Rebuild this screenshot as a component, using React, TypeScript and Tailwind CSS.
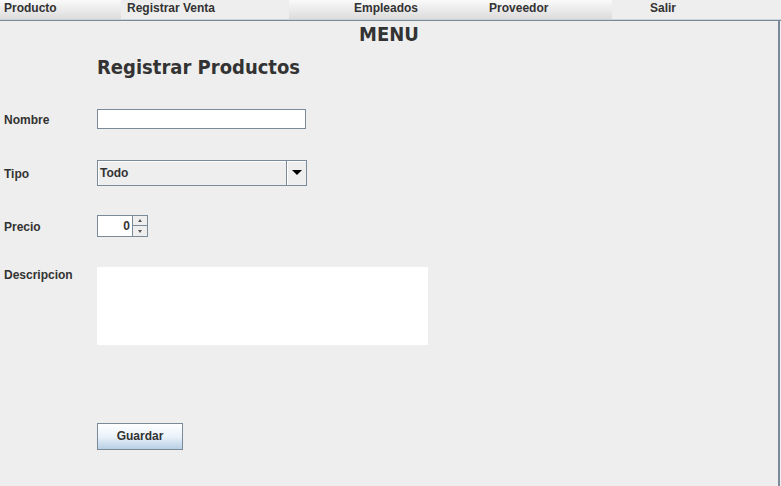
import React from "react";

const lbl = "font-['Liberation_Sans',Arial,sans-serif] font-bold text-[12px] text-[#333333]";

export default function App() {
  return (
    <div className="w-[781px] h-[486px] bg-[#eeeeee] flex flex-col overflow-hidden">
      {/* Menu bar */}
      <div className={`flex h-[19px] ${lbl}`}>
        <div className="w-[121px] bg-gradient-to-b from-[#fafafa] to-[#dcdcdc] pl-[4px] leading-[16px]">Producto</div>
        <div className="w-[168px] bg-[#eeeeee] pl-[6px] leading-[16px]">Registrar Venta</div>
        <div className="w-[323px] bg-gradient-to-b from-[#fafafa] to-[#dcdcdc] flex leading-[16px]">
          <span className="ml-[65px]">Empleados</span>
          <span className="ml-[71px]">Proveedor</span>
        </div>
        <div className="flex-1 bg-[#eeeeee] pl-[38px] leading-[16px]">Salir</div>
      </div>
      <div className="h-[1px] bg-[#c9d3dd]" />
      <div className="h-[1px] bg-[#7a8a99]" />
      {/* Main panel */}
      <div className="flex-1 flex flex-col border-r-2 border-[#7a8a99] mr-[1px]">
        <div className="h-[26px] text-center font-['DejaVu_Sans_Condensed','DejaVu_Sans',sans-serif] font-bold text-[20px] leading-[26px] text-[#333333]">
          MENU
        </div>
        <div className="mt-[6px] h-[28px] pl-[97px] font-['DejaVu_Sans_Condensed','DejaVu_Sans',sans-serif] font-bold text-[20px] leading-[28px] text-[#333333]">
          Registrar Productos
        </div>
        {/* Nombre */}
        <div className="mt-[28px] flex items-center h-[20px]">
          <div className={`w-[97px] pl-[4px] pt-[2px] ${lbl}`}>Nombre</div>
          <div className="w-[209px] h-[20px] bg-white border border-[#7a8a99] shadow-[inset_-1px_-1px_0_#ffffff]" />
        </div>
        {/* Tipo */}
        <div className="mt-[31px] flex items-center h-[26px]">
          <div className={`w-[97px] pl-[4px] pt-[2px] ${lbl}`}>Tipo</div>
          <div className="w-[210px] h-[26px] border border-[#7a8a99] flex bg-[#eeeeee]">
            <div className={`flex-1 pl-[2px] leading-[24px] border-r border-[#7a8a99] shadow-[inset_1px_1px_0_#ffffff] ${lbl}`}>Todo</div>
            <div className="w-[19px] flex items-center justify-center bg-[#eeeeee] shadow-[inset_1px_1px_0_#ffffff]">
              <svg width="10" height="6" viewBox="0 0 10 6">
                <path d="M0 0 H10 L5 5 Z" fill="#000000" />
              </svg>
            </div>
          </div>
        </div>
        {/* Precio */}
        <div className="mt-[29px] flex items-center h-[22px]">
          <div className={`w-[97px] pl-[4px] pt-[2px] ${lbl}`}>Precio</div>
          <div className="flex h-[22px]">
            <div className={`w-[35px] h-[22px] bg-white border-l border-t border-b border-[#7a8a99] text-right pr-[2px] leading-[20px] ${lbl}`}>0</div>
            <div className="w-[16px] h-[22px] flex flex-col">
              <div className="h-[11px] border border-[#7a8a99] bg-[#eeeeee] flex items-center justify-center">
                <svg width="4" height="3" viewBox="0 0 4 3"><path d="M0 3 L2 0 L4 3 Z" fill="#555" /></svg>
              </div>
              <div className="h-[11px] border-x border-b border-[#7a8a99] bg-[#eeeeee] flex items-center justify-center">
                <svg width="4" height="3" viewBox="0 0 4 3"><path d="M0 0 L4 0 L2 3 Z" fill="#555" /></svg>
              </div>
            </div>
          </div>
        </div>
        {/* Descripcion */}
        <div className="mt-[30px] flex h-[78px]">
          <div className={`w-[97px] pl-[4px] pt-[1px] leading-[14px] ${lbl}`}>Descripcion</div>
          <div className="w-[331px] h-[78px] bg-white" />
        </div>
        {/* Guardar */}
        <div className="mt-[77px] pl-[97px]">
          <button className={`w-[86px] h-[27px] border border-[#7a8a99] bg-gradient-to-b from-[#ffffff] via-[#eaf2fa] to-[#b8cfe5] ${lbl}`}>
            Guardar
          </button>
        </div>
      </div>
    </div>
  );
}
